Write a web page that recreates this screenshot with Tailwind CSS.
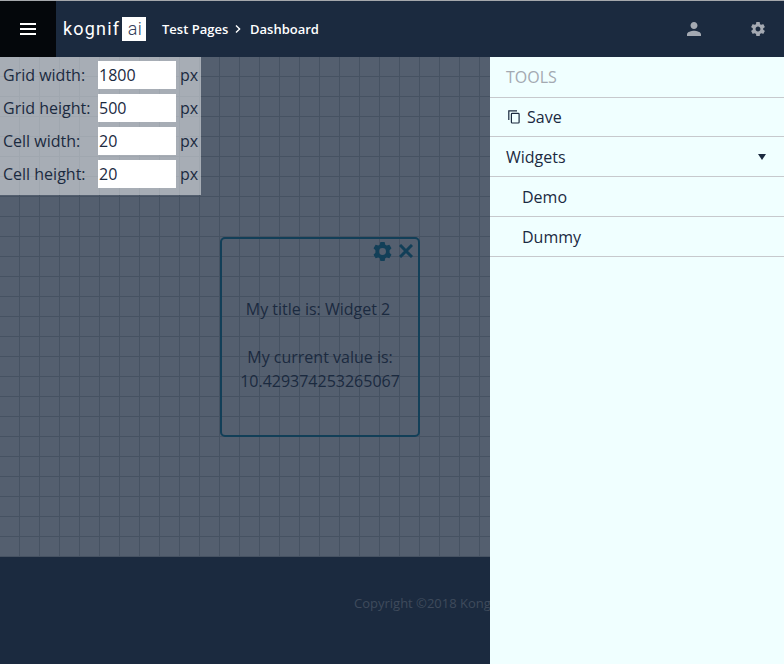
<!DOCTYPE html>
<html lang="en">
<head>
<meta charset="utf-8">
<title>Dashboard</title>
<script src="https://cdn.jsdelivr.net/npm/@tailwindcss/browser@4"></script>
</head>
<body class="w-[784px] h-[664px] overflow-hidden flex flex-col bg-[#1b2a3f] font-['Open_Sans',sans-serif] text-[16px] leading-6 text-[#1b2a3f]">
  <header class="h-[57px] shrink-0 border-t border-[#a5a8ac] flex items-stretch text-white">
    <button class="w-14 bg-[#04070b] flex items-center justify-center" aria-label="Menu">
      <svg class="w-4 h-3" viewBox="0 0 16 12" fill="#fff"><path d="M0 0h16v2H0zM0 5h16v2H0zM0 10h16v2H0z"/></svg>
    </button>
    <div class="ml-[7px] w-[83px] flex items-center justify-between font-[Roboto,sans-serif] text-[18px]">
      <span class="w-[58px] tracking-[1.2px]">kognif</span>
      <span class="size-6 bg-white text-[#33405a] font-light flex items-center justify-center tracking-[0.5px] pl-0.5">ai</span>
    </div>
    <nav class="ml-4 flex items-center text-[13px] font-semibold">
      <span class="w-[66px] whitespace-nowrap">Test Pages</span>
      <svg class="w-[6px] h-[8px] ml-[7px] mr-[9px]" viewBox="0 0 6 8" fill="none" stroke="#fff" stroke-width="1.4"><path d="M1 .5 4.6 4 1 7.5"/></svg>
      <span>Dashboard</span>
    </nav>
    <div class="ml-auto mr-[19px] flex items-center gap-[50px]">
      <svg class="size-[14px]" viewBox="4 4 16 16" fill="#a4a9b2"><path d="M12 12c2.21 0 4-1.79 4-4s-1.790-4-4-4-4 1.790-4 4 1.790 4 4 4zm0 2c-2.670 0-8 1.340-8 4v2h16v-2c0-2.660-5.330-4-8-4z"/></svg>
      <svg class="size-[14px]" viewBox="2 2 20 20" fill="#a4a9b2"><path d="M19.430 12.980c.04-.32.07-.64.07-.98s-.03-.66-.07-.98l2.110-1.650c.19-.15.24-.42.12-.64l-2-3.460c-.12-.22-.39-.3-.61-.22l-2.490 1c-.52-.4-1.080-.73-1.690-.98l-.38-2.650C14.460 2.180 14.250 2 14 2h-4c-.25 0-.46.18-.49.42l-.38 2.650c-.61.25-1.170.59-1.690.98l-2.490-1c-.23-.09-.49 0-.61.22l-2 3.460c-.13.22-.07.49.12.64l2.110 1.650c-.04.32-.07.65-.07.98s.03.66.07.98l-2.110 1.650c-.19.15-.24.42-.12.64l2 3.460c.12.22.39.3.61.22l2.490-1c.52.4 1.080.73 1.690.98l.38 2.650c.03.24.24.42.49.42h4c.25 0 .46-.18.49-.42l.38-2.650c.61-.25 1.170-.59 1.690-.98l2.490 1c.23.09.49 0 .61-.22l2-3.460c.12-.22.07-.49-.12-.64l-2.110-1.650zM12 15.500c-1.930 0-3.500-1.570-3.500-3.500s1.570-3.500 3.500-3.500 3.500 1.570 3.500 3.500-1.570 3.500-3.500 3.500z"/></svg>
    </div>
  </header>
  <div class="flex flex-1 min-h-0">
    <main class="w-[490px] shrink-0 overflow-hidden flex flex-col">
      <section class="relative h-[500px] shrink-0 bg-[#545f6f] bg-[linear-gradient(to_right,transparent_19px,#465262_19px),linear-gradient(to_bottom,transparent_19px,#465262_19px)] bg-[length:20px_20px]">
        <form class="w-[201px] h-[138px] bg-[#fafcfb]/50 pl-[3px] pt-1 grid grid-cols-[95px_82px_1fr] auto-rows-[28px] gap-y-[5px] items-center">
          <label>Grid width:</label><input class="w-[78px] h-7 bg-white pl-px" value="1800"><span>px</span>
          <label>Grid height:</label><input class="w-[78px] h-7 bg-white pl-px" value="500"><span>px</span>
          <label>Cell width:</label><input class="w-[78px] h-7 bg-white pl-px" value="20"><span>px</span>
          <label>Cell height:</label><input class="w-[78px] h-7 bg-white pl-px" value="20"><span>px</span>
        </form>
        <article class="absolute left-[220px] top-[180px] size-[200px] border-2 border-[#123f58] rounded-[5px] flex flex-col text-center">
          <div class="h-6 flex items-center justify-end gap-[7px] pr-[5px]">
            <svg class="size-[19px]" viewBox="0 0 18 18" fill="#123f58"><path fill-rule="evenodd" d="M7 0h4l.6 2.500 1.400.8 2.500-.7 2 3.400-1.800 1.800v2.400l1.800 1.800-2 3.400-2.500-.7-1.400.8L11 18H7l-.6-2.500-1.400-.8-2.500.7-2-3.400 1.800-1.800V7.800L.5 6l2-3.400 2.500.7 1.400-.8zM9 5.700a3.300 3.300 0 1 0 0 6.600 3.300 3.300 0 0 0 0-6.600z"/></svg>
            <svg class="size-[14px]" viewBox="0 0 14 14" stroke="#123f58" stroke-width="3"><path d="M1 1 13 13M13 1 1 13"/></svg>
          </div>
          <p class="mt-[34px] pr-1">My title is: Widget 2</p>
          <p class="mt-6">My current value is:<br>10.429374253265067</p>
        </article>
      </section>
      <footer class="pl-[354px] pt-[37px] text-[13px] leading-[18px] text-[#3f4a5c] whitespace-nowrap">Copyright ©2018 Kong</footer>
    </main>
    <aside class="flex-1 bg-[#f0ffff]">
      <h2 class="h-[41px] pl-4 flex items-center border-b border-[#c7c9cd] text-[#a3a9b1]">TOOLS</h2>
      <div class="h-[39px] pl-[18px] flex items-center gap-[7px] border-b border-[#c7c9cd]">
        <svg class="w-3 h-[14px]" viewBox="0 0 12 14" fill="none" stroke="#1b2a3f" stroke-width="1.2"><path d="M.8 10V.9H9"/><rect x="3.400" y="3.400" width="7.700" height="9.600" rx=".8"/></svg>
        <span>Save</span>
      </div>
      <div class="h-10 pl-4 pr-[18px] flex items-center justify-between border-b border-[#c7c9cd]">
        <span>Widgets</span>
        <svg class="w-2 h-[6px]" viewBox="0 0 8 6" fill="#1b2a3f"><path d="M0 0h8L4 6z"/></svg>
      </div>
      <div class="h-10 pl-8 flex items-center border-b border-[#c7c9cd]">Demo</div>
      <div class="h-10 pl-8 flex items-center border-b border-[#c7c9cd]">Dummy</div>
    </aside>
  </div>
</body>
</html>
